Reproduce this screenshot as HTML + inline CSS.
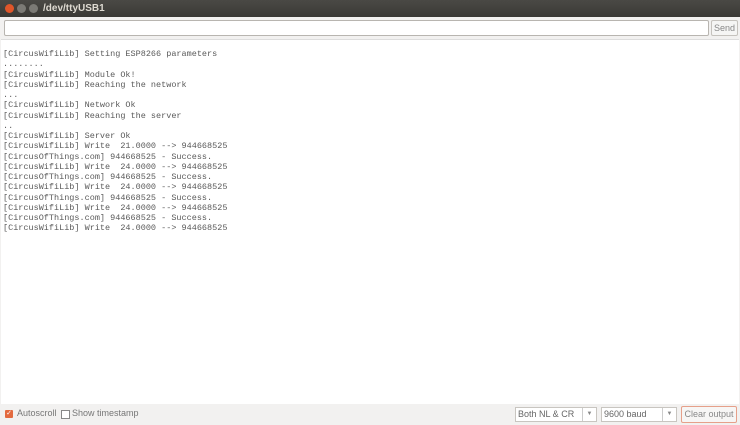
<!DOCTYPE html><html><head><style>
body{margin:0;width:740px;height:425px;overflow:hidden;background:#f2f1f0;font-family:"Liberation Sans",sans-serif;position:relative}
.t{position:absolute;left:0;top:0;width:740px;height:17px;background:linear-gradient(#4a4945,#3a3935);}
.t b{position:absolute;top:4px;width:9px;height:9px;border-radius:50%;}
.tt{position:absolute;left:43px;top:3px;font-size:10px;font-weight:bold;color:#dfdbd2}
.in{position:absolute;left:4px;top:20px;width:703px;height:14px;background:#fff;border:1px solid #b8b5b0;border-radius:2px}
.send{position:absolute;left:711px;top:20px;width:25px;height:14px;border:1px solid #c5c2bd;border-radius:2px;font-size:9px;color:#888;text-align:center;line-height:14px;background:#f5f5f4}
.out{position:absolute;left:1px;top:39px;width:738px;height:364px;background:#fff;border-top:1px solid #ddd}
pre{margin:0;position:absolute;left:2px;top:9px;font-family:"Liberation Mono",monospace;font-size:8.5px;line-height:10.25px;color:#5a5a5a}
.bot{position:absolute;top:408px;font-size:9px;color:#777}
.sel{position:absolute;top:407px;height:13px;border:1px solid #c8c5c0;background:#fff;font-size:9px;color:#666;line-height:13px;padding-left:2px;box-sizing:content-box}
.sel i{position:absolute;right:0;top:0;width:13px;height:13px;border-left:1px solid #ccc;font-style:normal;font-size:6px;text-align:center;color:#888}
</style></head><body>
<div class="t"><b style="left:5px;background:#e0562a"></b><b style="left:17px;background:#7b7a75"></b><b style="left:29px;background:#7b7a75"></b><div class="tt">/dev/ttyUSB1</div></div>
<div class="in"></div><div class="send">Send</div>
<div class="out"><pre>[CircusWifiLib] Setting ESP8266 parameters
........
[CircusWifiLib] Module Ok!
[CircusWifiLib] Reaching the network
...
[CircusWifiLib] Network Ok
[CircusWifiLib] Reaching the server
..
[CircusWifiLib] Server Ok
[CircusWifiLib] Write  21.0000 --&gt; 944668525
[CircusOfThings.com] 944668525 - Success.
[CircusWifiLib] Write  24.0000 --&gt; 944668525
[CircusOfThings.com] 944668525 - Success.
[CircusWifiLib] Write  24.0000 --&gt; 944668525
[CircusOfThings.com] 944668525 - Success.
[CircusWifiLib] Write  24.0000 --&gt; 944668525
[CircusOfThings.com] 944668525 - Success.
[CircusWifiLib] Write  24.0000 --&gt; 944668525</pre></div>
<div style="position:absolute;left:5px;top:410px;width:8px;height:8px;background:#e36a3f;border-radius:1px;color:#fff;font-size:7px;line-height:8px;text-align:center">✓</div>
<div class="bot" style="left:17px">Autoscroll</div>
<div style="position:absolute;left:61px;top:410px;width:7px;height:7px;border:1px solid #888;background:#fff"></div>
<div class="bot" style="left:72px">Show timestamp</div>
<div class="sel" style="left:515px;width:78px">Both NL &amp; CR<i>▼</i></div>
<div class="sel" style="left:601px;width:72px">9600 baud<i>▼</i></div>
<div style="position:absolute;left:681px;top:406px;width:54px;height:15px;border:1px solid #e6a08a;border-radius:2px;font-size:9px;color:#888;text-align:center;line-height:15px;background:#f7f6f5">Clear output</div>
</body></html>
